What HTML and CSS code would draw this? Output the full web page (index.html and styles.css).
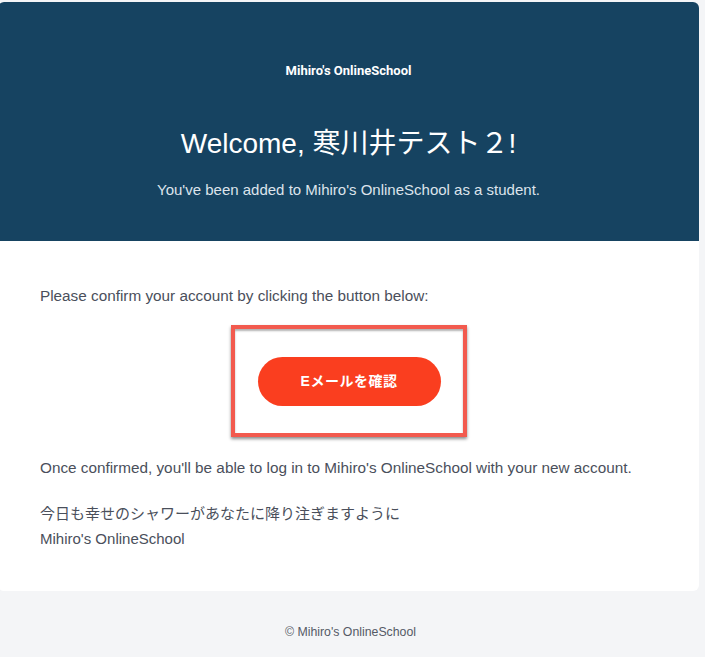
FILE: index.html
```html
<!doctype html>
<html lang="ja">
<head>
    <meta charset="UTF-8">
    <title>Mihiro's OnlineSchool</title>
    <link rel="stylesheet" href="styles.css">
</head>
<body>
    <div class="card">
      <div class="header">
        <div class="brand">Mihiro's OnlineSchool</div>
        <h1 class="title">Welcome, 寒川井テスト２!</h1>
        <p class="subtitle">You've been added to Mihiro's OnlineSchool as a student.</p>
      </div>
      <div class="content">
        <p class="text">Please confirm your account by clicking the button below:</p>
        <div class="action">
          <div class="highlight">
            <a class="button" href="#">Eメールを確認</a>
          </div>
        </div>
        <p class="text">Once confirmed, you'll be able to log in to Mihiro's OnlineSchool with your new account.</p>
        <p class="text sign">今日も幸せのシャワーがあなたに降り注ぎますように<br />Mihiro's OnlineSchool</p>
      </div>
    </div>
    <div class="footer">© Mihiro's OnlineSchool</div>
</body>
</html>
```

FILE: styles.css
```css
html, body {
  margin: 0;
  padding: 0;
  background-color: #f4f5f7;
  font-family: "Liberation Sans", Arial, "Noto Sans CJK JP", sans-serif;
}
body {
  padding-top: 2px;
}
.card {
  width: 701px;
  margin-left: -2px;
  border-radius: 6px;
  background-color: #fff;
  overflow: hidden;
}
.header {
  height: 239px;
  box-sizing: border-box;
  padding-top: 60px;
  background-color: #164361;
  color: #fff;
  text-align: center;
}
.brand {
  font-family: Roboto, "Liberation Sans", sans-serif;
  font-size: 13px;
  font-weight: bold;
  line-height: 18px;
}
.title {
  margin: 46px 0 0;
  font-size: 28px;
  font-weight: normal;
  line-height: 36px;
}
.subtitle {
  margin: 18px 0 0;
  font-size: 15px;
  line-height: 20px;
  color: #dde4ec;
}
.content {
  padding: 43px 40px 40px 42px;
  color: #4a4f5b;
}
.text {
  margin: 0;
  font-size: 15.3px;
  line-height: 24px;
}
.action {
  display: flex;
  justify-content: center;
  margin: 17px 0 19px;
  padding-right: 2px;
}
.highlight {
  display: flex;
  padding: 28px 22px 27px 23px;
  border: 4px solid #f25a4e;
  box-shadow: 0 2px 3px rgba(0, 0, 0, 0.45), inset 0 2px 2px rgba(0, 0, 0, 0.3);
}
.button {
  display: block;
  width: 183px;
  height: 49px;
  line-height: 49px;
  border-radius: 25px;
  background-color: #fa3e1f;
  color: #fff;
  font-family: "Liberation Sans", "Noto Sans CJK JP", sans-serif;
  font-size: 14px;
  font-weight: bold;
  letter-spacing: 0.5px;
  text-align: center;
  text-decoration: none;
}
.sign {
  margin-top: 21px;
  font-size: 15px;
  line-height: 25px;
}
.footer {
  padding-top: 32px;
  padding-right: 4px;
  text-align: center;
  font-size: 12.3px;
  line-height: 18px;
  color: #555a66;
}
```
